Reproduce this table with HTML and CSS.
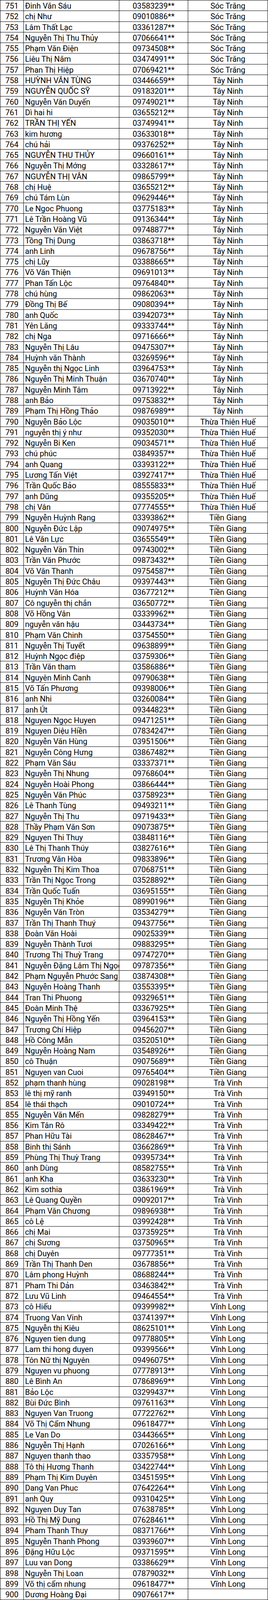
FILE: index.html
```html
<!DOCTYPE html>
<html lang="vi">
<head>
<meta charset="utf-8">
<title>Danh sách</title>
<link rel="stylesheet" href="styles.css">
</head>
<body>
<div class="sheet">
<div class="row"><div class="no">751</div><div class="name">Đinh Văn Sáu</div><div class="phone">03583239**</div><div class="prov">Sóc Trăng</div></div>
<div class="row"><div class="no">752</div><div class="name">chị Như</div><div class="phone">09010886**</div><div class="prov">Sóc Trăng</div></div>
<div class="row"><div class="no">753</div><div class="name">Lâm Thất Lạc</div><div class="phone">03361287**</div><div class="prov">Sóc Trăng</div></div>
<div class="row"><div class="no">754</div><div class="name">Nguyễn Thị Thu Thủy</div><div class="phone">07066641**</div><div class="prov">Sóc Trăng</div></div>
<div class="row"><div class="no">755</div><div class="name">Phạm Văn Điện</div><div class="phone">09734508**</div><div class="prov">Sóc Trăng</div></div>
<div class="row"><div class="no">756</div><div class="name">Liêu Thị Năm</div><div class="phone">03474991**</div><div class="prov">Sóc Trăng</div></div>
<div class="row"><div class="no">757</div><div class="name">Phan Thị Hiệp</div><div class="phone">07069421**</div><div class="prov">Sóc Trăng</div></div>
<div class="row"><div class="no">758</div><div class="name">HUỲNH VĂN TÙNG</div><div class="phone">03446659**</div><div class="prov">Tây Ninh</div></div>
<div class="row"><div class="no">759</div><div class="name">NGUYỄN QUỐC SỸ</div><div class="phone">09183201**</div><div class="prov">Tây Ninh</div></div>
<div class="row"><div class="no">760</div><div class="name">Nguyễn Văn Duyến</div><div class="phone">09749021**</div><div class="prov">Tây Ninh</div></div>
<div class="row"><div class="no">761</div><div class="name">Dì hai hi</div><div class="phone">03655212**</div><div class="prov">Tây Ninh</div></div>
<div class="row"><div class="no">762</div><div class="name">TRẦN THỊ YẾN</div><div class="phone">03749941**</div><div class="prov">Tây Ninh</div></div>
<div class="row"><div class="no">763</div><div class="name">kim hương</div><div class="phone">03633018**</div><div class="prov">Tây Ninh</div></div>
<div class="row"><div class="no">764</div><div class="name">chú hải</div><div class="phone">09376252**</div><div class="prov">Tây Ninh</div></div>
<div class="row"><div class="no">765</div><div class="name">NGUYỄN THU THỦY</div><div class="phone">09660161**</div><div class="prov">Tây Ninh</div></div>
<div class="row"><div class="no">766</div><div class="name">Nguyễn Thị Mớng</div><div class="phone">03328617**</div><div class="prov">Tây Ninh</div></div>
<div class="row"><div class="no">767</div><div class="name">NGUYỄN THỊ VÂN</div><div class="phone">09865799**</div><div class="prov">Tây Ninh</div></div>
<div class="row"><div class="no">768</div><div class="name">chị Huệ</div><div class="phone">03655212**</div><div class="prov">Tây Ninh</div></div>
<div class="row"><div class="no">769</div><div class="name">chú Tám Lùn</div><div class="phone">09629446**</div><div class="prov">Tây Ninh</div></div>
<div class="row"><div class="no">770</div><div class="name">Le Ngoc Phuong</div><div class="phone">03775183**</div><div class="prov">Tây Ninh</div></div>
<div class="row"><div class="no">771</div><div class="name">Lê Trần Hoàng Vũ</div><div class="phone">09136344**</div><div class="prov">Tây Ninh</div></div>
<div class="row"><div class="no">772</div><div class="name">Nguyễn Văn Việt</div><div class="phone">09748877**</div><div class="prov">Tây Ninh</div></div>
<div class="row"><div class="no">773</div><div class="name">Tồng Thị Dung</div><div class="phone">03863718**</div><div class="prov">Tây Ninh</div></div>
<div class="row"><div class="no">774</div><div class="name">anh Linh</div><div class="phone">09678756**</div><div class="prov">Tây Ninh</div></div>
<div class="row"><div class="no">775</div><div class="name">chị Lũy</div><div class="phone">03388665**</div><div class="prov">Tây Ninh</div></div>
<div class="row"><div class="no">776</div><div class="name">Võ Văn Thiện</div><div class="phone">09691013**</div><div class="prov">Tây Ninh</div></div>
<div class="row"><div class="no">777</div><div class="name">Phan Tấn Lộc</div><div class="phone">09764840**</div><div class="prov">Tây Ninh</div></div>
<div class="row"><div class="no">778</div><div class="name">chú hùng</div><div class="phone">09862063**</div><div class="prov">Tây Ninh</div></div>
<div class="row"><div class="no">779</div><div class="name">Đồng Thị Bế</div><div class="phone">09080394**</div><div class="prov">Tây Ninh</div></div>
<div class="row"><div class="no">780</div><div class="name">anh Quốc</div><div class="phone">03942073**</div><div class="prov">Tây Ninh</div></div>
<div class="row"><div class="no">781</div><div class="name">Yên Lăng</div><div class="phone">09333744**</div><div class="prov">Tây Ninh</div></div>
<div class="row"><div class="no">782</div><div class="name">chị Nga</div><div class="phone">09716666**</div><div class="prov">Tây Ninh</div></div>
<div class="row"><div class="no">783</div><div class="name">Nguyễn Thị Lâu</div><div class="phone">09475307**</div><div class="prov">Tây Ninh</div></div>
<div class="row"><div class="no">784</div><div class="name">Huỳnh văn Thành</div><div class="phone">03269596**</div><div class="prov">Tây Ninh</div></div>
<div class="row"><div class="no">785</div><div class="name">Nguyễn thị Ngọc Linh</div><div class="phone">03964753**</div><div class="prov">Tây Ninh</div></div>
<div class="row"><div class="no">786</div><div class="name">Nguyễn Thị Minh Thuận</div><div class="phone">03670740**</div><div class="prov">Tây Ninh</div></div>
<div class="row"><div class="no">787</div><div class="name">Nguyễn Minh Tâm</div><div class="phone">09713922**</div><div class="prov">Tây Ninh</div></div>
<div class="row"><div class="no">788</div><div class="name">anh Bảo</div><div class="phone">09753832**</div><div class="prov">Tây Ninh</div></div>
<div class="row"><div class="no">789</div><div class="name">Phạm Thị Hồng Thảo</div><div class="phone">09876989**</div><div class="prov">Tây Ninh</div></div>
<div class="row"><div class="no">790</div><div class="name">Nguyễn Bảo Lộc</div><div class="phone">09035010**</div><div class="prov">Thừa Thiên Huế</div></div>
<div class="row"><div class="no">791</div><div class="name">nguyễn thị ý như</div><div class="phone">09352030**</div><div class="prov">Thừa Thiên Huế</div></div>
<div class="row"><div class="no">792</div><div class="name">Nguyễn Bi Ken</div><div class="phone">09034571**</div><div class="prov">Thừa Thiên Huế</div></div>
<div class="row"><div class="no">793</div><div class="name">chú phúc</div><div class="phone">03849357**</div><div class="prov">Thừa Thiên Huế</div></div>
<div class="row"><div class="no">794</div><div class="name">anh Quang</div><div class="phone">03393122**</div><div class="prov">Thừa Thiên Huế</div></div>
<div class="row"><div class="no">795</div><div class="name">Lương Tấn Việt</div><div class="phone">03927417**</div><div class="prov">Thừa Thiên Huế</div></div>
<div class="row"><div class="no">796</div><div class="name">Trần Quốc Bảo</div><div class="phone">08555833**</div><div class="prov">Thừa Thiên Huế</div></div>
<div class="row"><div class="no">797</div><div class="name">anh Dũng</div><div class="phone">09355205**</div><div class="prov">Thừa Thiên Huế</div></div>
<div class="row"><div class="no">798</div><div class="name">chị Vân</div><div class="phone">07774555**</div><div class="prov">Thừa Thiên Huế</div></div>
<div class="row"><div class="no">799</div><div class="name">Nguyễn Huỳnh Rạng</div><div class="phone">03393862**</div><div class="prov">Tiền Giang</div></div>
<div class="row"><div class="no">800</div><div class="name">Nguyễn Đức Lập</div><div class="phone">09074975**</div><div class="prov">Tiền Giang</div></div>
<div class="row"><div class="no">801</div><div class="name">Lê Văn Lực</div><div class="phone">03655549**</div><div class="prov">Tiền Giang</div></div>
<div class="row"><div class="no">802</div><div class="name">Nguyễn Văn Thin</div><div class="phone">09743002**</div><div class="prov">Tiền Giang</div></div>
<div class="row"><div class="no">803</div><div class="name">Trần Văn Phước</div><div class="phone">09873432**</div><div class="prov">Tiền Giang</div></div>
<div class="row"><div class="no">804</div><div class="name">Võ Văn Thanh</div><div class="phone">09754587**</div><div class="prov">Tiền Giang</div></div>
<div class="row"><div class="no">805</div><div class="name">Nguyễn Thị Đức Châu</div><div class="phone">09397443**</div><div class="prov">Tiền Giang</div></div>
<div class="row"><div class="no">806</div><div class="name">Huỳnh Văn Hóa</div><div class="phone">03677212**</div><div class="prov">Tiền Giang</div></div>
<div class="row"><div class="no">807</div><div class="name">Cô nguyễn thị chắn</div><div class="phone">03650772**</div><div class="prov">Tiền Giang</div></div>
<div class="row"><div class="no">808</div><div class="name">Võ Hồng Vân</div><div class="phone">03339962**</div><div class="prov">Tiền Giang</div></div>
<div class="row"><div class="no">809</div><div class="name">nguyễn văn hậu</div><div class="phone">03443734**</div><div class="prov">Tiền Giang</div></div>
<div class="row"><div class="no">810</div><div class="name">Phạm Văn Chinh</div><div class="phone">03754550**</div><div class="prov">Tiền Giang</div></div>
<div class="row"><div class="no">811</div><div class="name">Nguyễn Thị Tuyết</div><div class="phone">09638899**</div><div class="prov">Tiền Giang</div></div>
<div class="row"><div class="no">812</div><div class="name">Huỳnh Ngọc điệp</div><div class="phone">03759306**</div><div class="prov">Tiền Giang</div></div>
<div class="row"><div class="no">813</div><div class="name">Trần Văn tham</div><div class="phone">03586886**</div><div class="prov">Tiền Giang</div></div>
<div class="row"><div class="no">814</div><div class="name">Nguyên Minh Canh</div><div class="phone">09790638**</div><div class="prov">Tiền Giang</div></div>
<div class="row"><div class="no">815</div><div class="name">Võ Tấn Phương</div><div class="phone">09398006**</div><div class="prov">Tiền Giang</div></div>
<div class="row"><div class="no">816</div><div class="name">anh Nhi</div><div class="phone">03260084**</div><div class="prov">Tiền Giang</div></div>
<div class="row"><div class="no">817</div><div class="name">anh Út</div><div class="phone">09344823**</div><div class="prov">Tiền Giang</div></div>
<div class="row"><div class="no">818</div><div class="name">Nguyen Ngọc Huyen</div><div class="phone">09471251**</div><div class="prov">Tiền Giang</div></div>
<div class="row"><div class="no">819</div><div class="name">Nguyen Diệu Hiền</div><div class="phone">07834247**</div><div class="prov">Tiền Giang</div></div>
<div class="row"><div class="no">820</div><div class="name">Nguyễn Văn Hùng</div><div class="phone">03951506**</div><div class="prov">Tiền Giang</div></div>
<div class="row"><div class="no">821</div><div class="name">Nguyễn Công Hưng</div><div class="phone">03867482**</div><div class="prov">Tiền Giang</div></div>
<div class="row"><div class="no">822</div><div class="name">Phạm Văn Sáu</div><div class="phone">03337371**</div><div class="prov">Tiền Giang</div></div>
<div class="row"><div class="no">823</div><div class="name">Nguyễn Thị Nhung</div><div class="phone">09768604**</div><div class="prov">Tiền Giang</div></div>
<div class="row"><div class="no">824</div><div class="name">Nguyễn Hoài Phong</div><div class="phone">03866444**</div><div class="prov">Tiền Giang</div></div>
<div class="row"><div class="no">825</div><div class="name">Nguyễn Văn Phúc</div><div class="phone">03758923**</div><div class="prov">Tiền Giang</div></div>
<div class="row"><div class="no">826</div><div class="name">Lê Thanh Tùng</div><div class="phone">09493211**</div><div class="prov">Tiền Giang</div></div>
<div class="row"><div class="no">827</div><div class="name">Nguyễn Thị Thu</div><div class="phone">09719433**</div><div class="prov">Tiền Giang</div></div>
<div class="row"><div class="no">828</div><div class="name">Thầy Phạm Văn Sơn</div><div class="phone">09073875**</div><div class="prov">Tiền Giang</div></div>
<div class="row"><div class="no">829</div><div class="name">Nguyen Thi Thuy</div><div class="phone">03848116**</div><div class="prov">Tiền Giang</div></div>
<div class="row"><div class="no">830</div><div class="name">Lê Thị Thanh Thúy</div><div class="phone">03827616**</div><div class="prov">Tiền Giang</div></div>
<div class="row"><div class="no">831</div><div class="name">Trương Văn Hòa</div><div class="phone">09833896**</div><div class="prov">Tiền Giang</div></div>
<div class="row"><div class="no">832</div><div class="name">Nguyễn Thị Kim Thoa</div><div class="phone">07068751**</div><div class="prov">Tiền Giang</div></div>
<div class="row"><div class="no">833</div><div class="name">Trần Thị Ngọc Trong</div><div class="phone">03528892**</div><div class="prov">Tiền Giang</div></div>
<div class="row"><div class="no">834</div><div class="name">Trần Quốc Tuấn</div><div class="phone">03695155**</div><div class="prov">Tiền Giang</div></div>
<div class="row"><div class="no">835</div><div class="name">Nguyễn Thị Khỏe</div><div class="phone">08990196**</div><div class="prov">Tiền Giang</div></div>
<div class="row"><div class="no">836</div><div class="name">Nguyễn Văn Tròn</div><div class="phone">03534279**</div><div class="prov">Tiền Giang</div></div>
<div class="row"><div class="no">837</div><div class="name">Trần Thị Thanh Thuý</div><div class="phone">09437756**</div><div class="prov">Tiền Giang</div></div>
<div class="row"><div class="no">838</div><div class="name">Đoàn Văn Hoài</div><div class="phone">09025339**</div><div class="prov">Tiền Giang</div></div>
<div class="row"><div class="no">839</div><div class="name">Nguyễn Thành Tươi</div><div class="phone">09883295**</div><div class="prov">Tiền Giang</div></div>
<div class="row"><div class="no">840</div><div class="name">Trương Thị Thuỳ Trang</div><div class="phone">09747270**</div><div class="prov">Tiền Giang</div></div>
<div class="row"><div class="no">841</div><div class="name">Nguyễn Đặng Lâm Thị Ngọc</div><div class="phone">09787356**</div><div class="prov">Tiền Giang</div></div>
<div class="row"><div class="no">842</div><div class="name">Phạm Nguyễn Phước Sang</div><div class="phone">03874308**</div><div class="prov">Tiền Giang</div></div>
<div class="row"><div class="no">843</div><div class="name">Nguyễn Hoàng Thanh</div><div class="phone">03553395**</div><div class="prov">Tiền Giang</div></div>
<div class="row"><div class="no">844</div><div class="name">Tran Thi Phuong</div><div class="phone">09329651**</div><div class="prov">Tiền Giang</div></div>
<div class="row"><div class="no">845</div><div class="name">Đoàn Minh Thệ</div><div class="phone">03367925**</div><div class="prov">Tiền Giang</div></div>
<div class="row"><div class="no">846</div><div class="name">Nguyễn Thị Hồng Yến</div><div class="phone">03964153**</div><div class="prov">Tiền Giang</div></div>
<div class="row"><div class="no">847</div><div class="name">Trương Chí Hiệp</div><div class="phone">09456207**</div><div class="prov">Tiền Giang</div></div>
<div class="row"><div class="no">848</div><div class="name">Hồ Công Mẫn</div><div class="phone">03520510**</div><div class="prov">Tiền Giang</div></div>
<div class="row"><div class="no">849</div><div class="name">Nguyễn Hoàng Nam</div><div class="phone">03548926**</div><div class="prov">Tiền Giang</div></div>
<div class="row"><div class="no">850</div><div class="name">cô Thuận</div><div class="phone">09075689**</div><div class="prov">Tiền Giang</div></div>
<div class="row"><div class="no">851</div><div class="name">Nguyen van Cuoi</div><div class="phone">09765404**</div><div class="prov">Tiền Giang</div></div>
<div class="row"><div class="no">852</div><div class="name">phạm thanh hùng</div><div class="phone">09028198**</div><div class="prov">Trà Vinh</div></div>
<div class="row"><div class="no">853</div><div class="name">lê thị mỹ ranh</div><div class="phone">03949150**</div><div class="prov">Trà Vinh</div></div>
<div class="row"><div class="no">854</div><div class="name">lê thái thạch</div><div class="phone">09010724**</div><div class="prov">Trà Vinh</div></div>
<div class="row"><div class="no">855</div><div class="name">Nguyễn Văn Mến</div><div class="phone">09828279**</div><div class="prov">Trà Vinh</div></div>
<div class="row"><div class="no">856</div><div class="name">Kim Tân Rô</div><div class="phone">03349422**</div><div class="prov">Trà Vinh</div></div>
<div class="row"><div class="no">857</div><div class="name">Phan Hữu Tài</div><div class="phone">08628467**</div><div class="prov">Trà Vinh</div></div>
<div class="row"><div class="no">858</div><div class="name">Binh thị Sánh</div><div class="phone">03662869**</div><div class="prov">Trà Vinh</div></div>
<div class="row"><div class="no">859</div><div class="name">Phùng Thị Thuỳ Trang</div><div class="phone">09395734**</div><div class="prov">Trà Vinh</div></div>
<div class="row"><div class="no">860</div><div class="name">anh Dùng</div><div class="phone">08582755**</div><div class="prov">Trà Vinh</div></div>
<div class="row"><div class="no">861</div><div class="name">anh Kha</div><div class="phone">03633230**</div><div class="prov">Trà Vinh</div></div>
<div class="row"><div class="no">862</div><div class="name">Kim sothia</div><div class="phone">03861969**</div><div class="prov">Trà Vinh</div></div>
<div class="row"><div class="no">863</div><div class="name">Lê Quang Quyền</div><div class="phone">09092017**</div><div class="prov">Trà Vinh</div></div>
<div class="row"><div class="no">864</div><div class="name">Phạm Văn Chương</div><div class="phone">09896938**</div><div class="prov">Trà Vinh</div></div>
<div class="row"><div class="no">865</div><div class="name">cô Lệ</div><div class="phone">03992428**</div><div class="prov">Trà Vinh</div></div>
<div class="row"><div class="no">866</div><div class="name">chị Mai</div><div class="phone">03735925**</div><div class="prov">Trà Vinh</div></div>
<div class="row"><div class="no">867</div><div class="name">chị Sương</div><div class="phone">03750965**</div><div class="prov">Trà Vinh</div></div>
<div class="row"><div class="no">868</div><div class="name">chị Duyên</div><div class="phone">09777351**</div><div class="prov">Trà Vinh</div></div>
<div class="row"><div class="no">869</div><div class="name">Trần Thị Thanh Den</div><div class="phone">03678856**</div><div class="prov">Trà Vinh</div></div>
<div class="row"><div class="no">870</div><div class="name">Lâm phong Huỳnh</div><div class="phone">08688244**</div><div class="prov">Trà Vinh</div></div>
<div class="row"><div class="no">871</div><div class="name">Pham Thi Dản</div><div class="phone">03463842**</div><div class="prov">Trà Vinh</div></div>
<div class="row"><div class="no">872</div><div class="name">Lưu Vũ Linh</div><div class="phone">09464554**</div><div class="prov">Trà Vinh</div></div>
<div class="row"><div class="no">873</div><div class="name">cô Hiếu</div><div class="phone">09399982**</div><div class="prov">Vĩnh Long</div></div>
<div class="row"><div class="no">874</div><div class="name">Truong Van Vinh</div><div class="phone">03741397**</div><div class="prov">Vĩnh Long</div></div>
<div class="row"><div class="no">875</div><div class="name">Nguyễn thị Kiêu</div><div class="phone">08625101**</div><div class="prov">Vĩnh Long</div></div>
<div class="row"><div class="no">876</div><div class="name">Nguyen tien dung</div><div class="phone">09778805**</div><div class="prov">Vĩnh Long</div></div>
<div class="row"><div class="no">877</div><div class="name">Lam thi hong duyen</div><div class="phone">09399566**</div><div class="prov">Vĩnh Long</div></div>
<div class="row"><div class="no">878</div><div class="name">Tôn Nữ thị Nguyên</div><div class="phone">09496075**</div><div class="prov">Vĩnh Long</div></div>
<div class="row"><div class="no">879</div><div class="name">Nguyen vu phuong</div><div class="phone">07778913**</div><div class="prov">Vĩnh Long</div></div>
<div class="row"><div class="no">880</div><div class="name">Lê Bình An</div><div class="phone">07868969**</div><div class="prov">Vĩnh Long</div></div>
<div class="row"><div class="no">881</div><div class="name">Bảo Lộc</div><div class="phone">03299437**</div><div class="prov">Vĩnh Long</div></div>
<div class="row"><div class="no">882</div><div class="name">Bùi Đức Bình</div><div class="phone">09761163**</div><div class="prov">Vĩnh Long</div></div>
<div class="row"><div class="no">883</div><div class="name">Nguyen Van Truong</div><div class="phone">07722762**</div><div class="prov">Vĩnh Long</div></div>
<div class="row"><div class="no">884</div><div class="name">Võ Thị Cẩm Nhung</div><div class="phone">09618477**</div><div class="prov">Vĩnh Long</div></div>
<div class="row"><div class="no">885</div><div class="name">Le Van Do</div><div class="phone">03443665**</div><div class="prov">Vĩnh Long</div></div>
<div class="row"><div class="no">886</div><div class="name">Nguyễn Thị Hạnh</div><div class="phone">07026166**</div><div class="prov">Vĩnh Long</div></div>
<div class="row"><div class="no">887</div><div class="name">Nguyen thanh thao</div><div class="phone">03357958**</div><div class="prov">Vĩnh Long</div></div>
<div class="row"><div class="no">888</div><div class="name">Tô thị Hương Thanh</div><div class="phone">03422744**</div><div class="prov">Vĩnh Long</div></div>
<div class="row"><div class="no">889</div><div class="name">Phạm Thị Kim Duyên</div><div class="phone">03451595**</div><div class="prov">Vĩnh Long</div></div>
<div class="row"><div class="no">890</div><div class="name">Dang Van Phuc</div><div class="phone">07642264**</div><div class="prov">Vĩnh Long</div></div>
<div class="row"><div class="no">891</div><div class="name">anh Quy</div><div class="phone">09310425**</div><div class="prov">Vĩnh Long</div></div>
<div class="row"><div class="no">892</div><div class="name">Nguyen Duy Tan</div><div class="phone">07638785**</div><div class="prov">Vĩnh Long</div></div>
<div class="row"><div class="no">893</div><div class="name">Hồ Thị Mỹ Dung</div><div class="phone">07628461**</div><div class="prov">Vĩnh Long</div></div>
<div class="row"><div class="no">894</div><div class="name">Pham Thanh Thuy</div><div class="phone">08371766**</div><div class="prov">Vĩnh Long</div></div>
<div class="row"><div class="no">895</div><div class="name">Nguyễn Thanh Phong</div><div class="phone">03939607**</div><div class="prov">Vĩnh Long</div></div>
<div class="row"><div class="no">896</div><div class="name">Đặng Hữu Lộc</div><div class="phone">09371595**</div><div class="prov">Vĩnh Long</div></div>
<div class="row"><div class="no">897</div><div class="name">Luu van Dong</div><div class="phone">03386629**</div><div class="prov">Vĩnh Long</div></div>
<div class="row"><div class="no">898</div><div class="name">Nguyễn Thị Loan</div><div class="phone">07879032**</div><div class="prov">Vĩnh Long</div></div>
<div class="row"><div class="no">899</div><div class="name">Võ thị cẩm nhung</div><div class="phone">09618477**</div><div class="prov">Vĩnh Long</div></div>
<div class="row"><div class="no">900</div><div class="name">Dương Hoàng Đại</div><div class="phone">09076617**</div><div class="prov"></div></div>
</div>
</body>
</html>
```

FILE: styles.css
```css
html, body {
  margin: 0;
  padding: 0;
  background: #ffffff;
}

.sheet {
  --rh: min(29px, calc((100vh - 1px) / 150));
  width: 685px;
  border-top: 1px solid #000;
  font-family: Roboto, "Liberation Sans", sans-serif;
  font-size: 20px;
  color: #000;
}

.row {
  display: grid;
  grid-template-columns: 61px 244px 176px 204px;
  height: var(--rh);
}

.row > div {
  box-sizing: border-box;
  height: var(--rh);
  border-right: 1px solid #000;
  border-bottom: 1px solid #000;
  padding-top: 2px;
  line-height: calc(var(--rh) - 3px);
  white-space: nowrap;
  overflow: hidden;
}

.no {
  border-left: 1px solid #000;
  text-align: center;
}

.name {
  padding-left: 3px;
}

.phone,
.prov {
  text-align: center;
}
```
